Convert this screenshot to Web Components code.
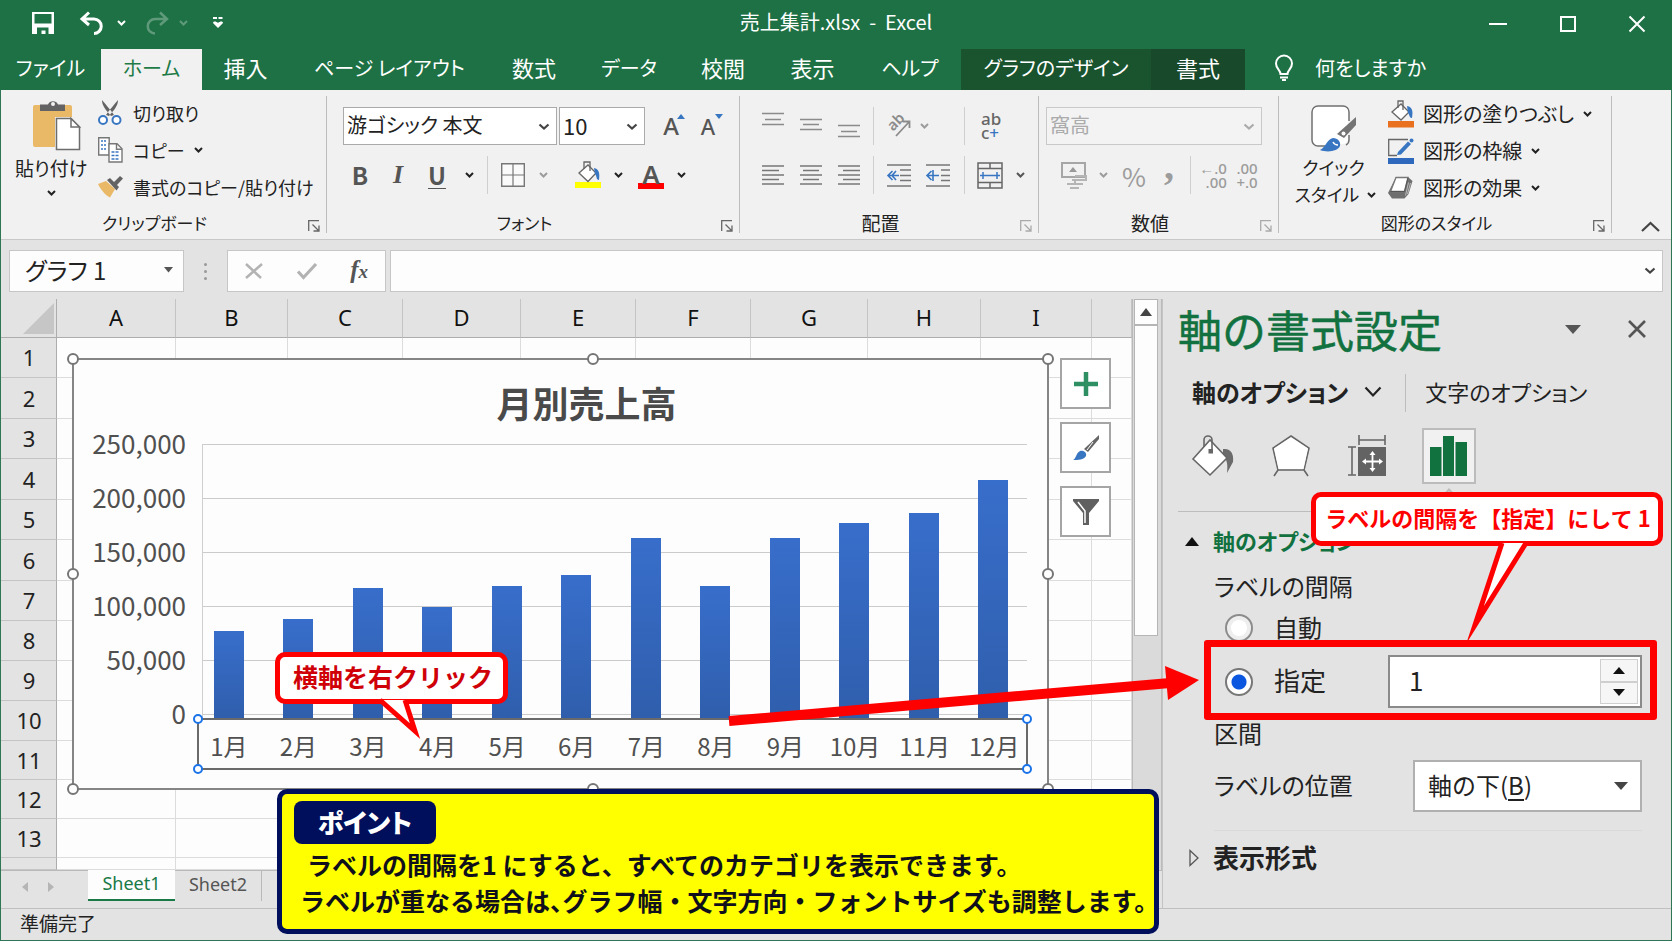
<!DOCTYPE html>
<html lang="ja">
<head>
<meta charset="utf-8">
<meta name="viewport" content="width=device-width, initial-scale=1">
<title>売上集計.xlsx - Excel</title>
<style>
  html, body { margin: 0; height: 100%; }
  body {
    font-family: "Noto Sans CJK JP", "Noto Sans", sans-serif;
    font-feature-settings: "palt";
    font-size: 20px;
    color: #222;
    overflow: hidden;
    --green: #1e7145;
  }
</style>
</head>
<body>
<excel-window></excel-window>

<script>
const BASE = `
  *, *::before, *::after { box-sizing: border-box; }
  button, input, select { font: inherit; font-feature-settings: inherit; color: inherit; margin: 0; padding: 0; border: 0; background: none; border-radius: 0; }
  button { display: grid; place-items: center; }
  svg { display: block; }
  [hidden] { display: none; }
`;
function define(name, css, html, setup) {
  const tpl = document.createElement('template');
  tpl.innerHTML = `<style>${BASE}${css}</style>${html}`;
  customElements.define(name, class extends HTMLElement {
    constructor() {
      super();
      this.attachShadow({ mode: 'open' }).append(tpl.content.cloneNode(true));
    }
    connectedCallback() { if (setup && !this.ready) { this.ready = true; setup(this, this.shadowRoot); } }
  });
}

/* ---------- icons ---------- */
const ICONS = {
  save: [22, 22, '<path d="M0 0h22v22H0z M2.500 2v9.500h17V2z M5 22v-6.500h11.500V22h-3v-3.500H9.500V22z" fill="#fff" fill-rule="evenodd"/>'],
  undo: [24, 24, '<path d="M9 1.500 2 8l7 6M2.500 8H14a7 7 0 0 1 0 14.500" fill="none" stroke="#fff" stroke-width="3"/>'],
  redo: [24, 24, '<path d="M15 1.500 22 8l-7 6M21.500 8H10a7 7 0 0 0 0 14.500" fill="none" stroke="#5f9a7b" stroke-width="2.500"/>'],
  customize: [10, 12, '<path d="M0 0h4v2H0zM5.500 0h4v2h-4zM0 6c0-2 3-2 5 0 2-2 5-2 5 0L5 11z" fill="#fff"/>'],
  chev: [9, 6, '<path d="M1 1l3.500 3.500L8 1" fill="none" stroke="currentColor" stroke-width="2"/>'],
  chevBig: [18, 12, '<path d="M1.500 1.500 9 9.500l7.500-8" fill="none" stroke="currentColor" stroke-width="2.200"/>'],
  up: [19, 11, '<path d="M1 10l8.500-8 8.500 8" fill="none" stroke="#444" stroke-width="2.200"/>'],
  down: [12, 8, '<path d="M1.500 1.500 6 5.500l4.500-4" fill="none" stroke="currentColor" stroke-width="2.200"/>'],
  tri: [9, 6, '<path d="M0 0h9L4.500 5.500z" fill="#555"/>'],
  triMid: [14, 8, '<path d="M0 0h14L7 8z" fill="#444"/>'],
  triBig: [16, 9, '<path d="M0 0h16L8 9z" fill="#555"/>'],
  triUp: [12, 8, '<path d="M0 8h12L6 0z" fill="#444"/>'],
  spinUp: [12, 7, '<path d="M0 7h12L6 0z" fill="#111"/>'],
  spinDown: [12, 7, '<path d="M0 0h12L6 7z" fill="#111"/>'],
  secOpen: [14, 9, '<path d="M0 9h14L7 0z" fill="#111"/>'],
  secClosed: [10, 18, '<path d="M1 1.500v15L9 9z" fill="none" stroke="#555" stroke-width="1.300"/>'],
  navL: [6, 10, '<path d="M6 0v10L0 5z" fill="#b5b5b5"/>'],
  navR: [6, 10, '<path d="M0 0v10l6-5z" fill="#b5b5b5"/>'],
  min: [18, 16, '<path d="M0 8h18" stroke="#fff" stroke-width="2"/>'],
  max: [16, 16, '<path d="M1 1h14v14H1z" fill="none" stroke="#fff" stroke-width="2"/>'],
  close: [16, 16, '<path d="M.500.500l15 15M15.500.500l-15 15" stroke="#fff" stroke-width="2"/>'],
  closeDark: [18, 18, '<path d="M1 1l16 16M17 1L1 17" stroke="#555" stroke-width="2.600"/>'],
  bulb: [18, 26, '<path d="M5.500 19c0-4-4.500-5-4.500-10.500a8 8 0 0 1 16 0C17 14 12.500 15 12.500 19z" fill="none" stroke="#fff" stroke-width="2"/><path d="M5 22.500h8M7 25h4" stroke="#fff" stroke-width="1.800"/>'],
  paste: [48, 52, '<rect x="0" y="6" width="39" height="42" rx="2" fill="#e9b967"/><path d="M7 12V5.500h8a5.500 5.500 0 0 1 10 0h7V12z" fill="#636363"/><circle cx="20" cy="5" r="2" fill="#f1f1f1"/><path d="M22 18h17l9 9v25H22z" fill="#f1f1f1"/><path d="M23.500 19.500H38l8.500 8.500v22.500h-23z" fill="#fff" stroke="#6d6d6d" stroke-width="1.500"/><path d="M38 19.500V28h8.500z" fill="#fff" stroke="#6d6d6d" stroke-width="1.500"/>'],
  cut: [24, 26, '<path d="M4 0c0 6 4 10 9 16l3-1C12 9 8 5 4 0zM20 0c0 6-4 10-9 16l-3-1C12 9 16 5 20 0z" fill="#636363"/><circle cx="5" cy="20" r="4" fill="#fff" stroke="#3876c2" stroke-width="2"/><circle cx="18.500" cy="20" r="4" fill="#fff" stroke="#3876c2" stroke-width="2"/>'],
  copy: [25, 26, '<path d="M.700.700h10.500V18H.700z" fill="#fff" stroke="#777" stroke-width="1.400"/><path d="M3 4h6M3 8h6M3 12h6" stroke="#3876c2" stroke-width="1.500" stroke-dasharray="2 1"/><path d="M11 6.700h8l5 5V25H11z" fill="#fff" stroke="#777" stroke-width="1.400"/><path d="M18.500 6.700v5.500H24" fill="none" stroke="#777" stroke-width="1.400"/><path d="M13.500 15h8M13.500 18.500h8M13.500 22h7" stroke="#3876c2" stroke-width="1.500" stroke-dasharray="3 1"/>'],
  brush: [25, 22, '<path d="M0 8l8-3 9 8-5 8.500C7 19 3 14 0 8z" fill="#e9b967"/><path d="M9 4l3-2 4 4 6-6 3 2.500-6 6.500 2 2-2.500 3.500z" fill="#636363"/>'],
  launcher: [12, 12, '<path d="M.700 11V.700H11M4.500 4.500 11 11M11 5.500V11H5.500" fill="none" stroke="currentColor" stroke-width="1.300"/>'],
  borders: [24, 24, '<path d="M.700.700h22.600v22.600H.700z" fill="#fafafa" stroke="#777" stroke-width="1.400"/><path d="M12 1v22M1 12h22" stroke="#777" stroke-width="1.200"/>'],
  fillYellow: [26, 28, '<rect x="0" y="21" width="26" height="6" fill="#ff0"/><path d="M4 12l9-8 8 8-8 8.500z" fill="#fff" stroke="#666" stroke-width="1.300"/><path d="M9 8V1h6v9" fill="none" stroke="#666" stroke-width="1.300"/><path d="M19 7c5 1 6 5 5 12-3 0-2-4-4-6z" fill="#3876c2"/>'],
  fillOrange: [26, 28, '<rect x="0" y="21" width="26" height="6.500" fill="#e8701f"/><path d="M4 12l9-8 8 8-8 8z" fill="#fff" stroke="#666" stroke-width="1.300"/><path d="M10 8V1h5v9" fill="none" stroke="#666" stroke-width="1.300"/><path d="M19 6c6 1 6 6 5 12-3 0-2-3-4-5z" fill="#3876c2"/>'],
  outline: [26, 26, '<rect x="0" y="20" width="26" height="6" fill="#2f69bd"/><path d="M20 1.500H.700v16H9" fill="none" stroke="#666" stroke-width="1.300"/><path d="M10 14 20 3.500l3 2.500L13 16.500l-4 .500z" fill="#3876c2"/><circle cx="23.500" cy="2.500" r="2" fill="#3876c2"/>'],
  effects: [25, 23, '<path d="M8 1h12l4.500 4-4 13-4 4.500H4L0 17z" fill="#6f6f6f"/><path d="M8 1.500h12l-3.500 14H2.500z" fill="#fff" stroke="#777" stroke-width="1.300"/><path d="M2.500 15.500h14L20 2" fill="none" stroke="#555" stroke-width="1"/><path d="M17.500 19.500l3-13M19.500 18l3-11" stroke="#bbb" stroke-width="1"/>'],
  quick: [46, 48, '<path d="M28 41H7a6 6 0 0 1-6-6V7a6 6 0 0 1 6-6h25a6 6 0 0 1 6 6v9M38 30v5a6 6 0 0 1-3 5" fill="#fff" stroke="#707070" stroke-width="1.500"/><rect x="2" y="2" width="35" height="37" rx="5" fill="#fff"/><path d="M45 12v8L33 33l-7-4z" fill="#747474"/><circle cx="32.500" cy="28.500" r="2" fill="#fff"/><path d="M9 45c6-3 7-11 13-12 5 0 8 4 7 8-2 5-12 7-20 4z" fill="#3876c2"/><path d="M22 37c1 2 3 3 5 3" stroke="#fff" stroke-width="1.500" fill="none"/>'],
  alT: [22, 30, '<path d="M0 2.500h22M3 8.500h16M0 13.500h22" stroke="#8b8b8b" stroke-width="1.500"/>'],
  alM: [22, 30, '<path d="M0 8.500h22M3 13.500h16M0 18.500h22" stroke="#8b8b8b" stroke-width="1.500"/>'],
  alB: [22, 30, '<path d="M0 14.500h22M3 20.500h16M0 25.500h22" stroke="#8b8b8b" stroke-width="1.500"/>'],
  alL: [22, 20, '<path d="M0 1h22M0 5.500h17M0 10h22M0 14.500h17M0 19h22" stroke="#777" stroke-width="1.400"/>'],
  alC: [22, 20, '<path d="M0 1h22M3 5.500h16M0 10h22M3 14.500h16M0 19h22" stroke="#777" stroke-width="1.400"/>'],
  alR: [22, 20, '<path d="M0 1h22M5 5.500h17M0 10h22M5 14.500h17M0 19h22" stroke="#777" stroke-width="1.400"/>'],
  indL: [25, 23, '<path d="M0 1h24M13 6h11M13 11.500h11M13 16.500h11M0 22h24" stroke="#777" stroke-width="1.600"/><path d="M12 11.500H1M5.500 7 1 11.500 5.500 16M9 7l-4 4.500L9 16" stroke="#3876c2" stroke-width="1.600" fill="none"/>'],
  indR: [25, 23, '<path d="M0 1h24M15 6h9M15 11.500h9M15 16.500h9M0 22h24" stroke="#777" stroke-width="1.600"/><path d="M13 11.500H1M5.500 7 1 11.500 5.500 16M7 6v11" stroke="#3876c2" stroke-width="1.600" fill="none"/>'],
  diag: [24, 24, '<path d="M9 22 22 8M16 7.500h6.500V14" stroke="#8b8b8b" stroke-width="1.800" fill="none"/>'],
  merge: [26, 27, '<path d="M1 1h24v25H1zM1 6.500h24M1 20.500h24M13 1v5.500M13 20.500V26" fill="none" stroke="#666" stroke-width="1.500"/><path d="M3 13.500h20M6 10v7M20 10v7" stroke="#3876c2" stroke-width="1.500"/>'],
  money: [26, 28, '<path d="M1 2h23v14H1z" fill="#f1f1f1" stroke="#a6a6a6" stroke-width="2"/><path d="M8 11l4-5 4 5z" fill="#999"/><path d="M14 15h11v4H11M14 19v4h8M6 23h11M9 27h9" stroke="#b5b5b5" stroke-width="2" fill="none"/>'],
  selectAll: [31, 31, '<path d="M31 0v31H0z" fill="#c6c6c6"/>'],
  fxX: [18, 16, '<path d="M1 1l15 14M17 1 1 15" stroke="#b3b3b3" stroke-width="2.500"/>'],
  fxV: [20, 16, '<path d="M1 8.500l5.500 6L19 1" stroke="#b3b3b3" stroke-width="3.200" fill="none"/>'],
  plus: [24, 24, '<path d="M12 0v24M0 12h24" stroke="#2e8f63" stroke-width="4.500"/>'],
  brush2: [28, 28, '<path d="M27 1v4L16 18l-4-3z" fill="#666"/><path d="M21 8l-6 8" stroke="#fff" stroke-width="1"/><path d="M1 26c3-1 3-7 7-9 4-1 7 2 6 5-2 4-8 4-13 4z" fill="#3876c2"/>'],
  funnel: [26, 26, '<path d="M0 0h26v2L16 14v12h-6V14L0 2z" fill="#606060"/><path d="M5 3l7 9v12" stroke="#fff" stroke-width="1.500" fill="none"/>'],
  paneFill: [42, 42, '<path d="M31 14c8-1 11 5 10 13l-6 11c1-9 0-14-4-16z" fill="#6b6b6b"/><path d="M1 24 18 5l17 18-17 17z" fill="#fff" stroke="#666" stroke-width="1.600"/><path d="M12 12V5a4 4 0 0 1 8 0v13" fill="none" stroke="#666" stroke-width="1.600"/><rect x="16.500" y="14" width="4.500" height="4.500" fill="#666"/>'],
  pentagon: [38, 42, '<path d="M19 1l18 12-5 22H6L1 13zM6 35l-4 6M32 35l4 6" fill="none" stroke="#666" stroke-width="1.600"/><path d="M19 2.200 36 13.500 31.500 34h-25L2 13.500z" fill="#fff"/>'],
  sizeProps: [38, 42, '<rect x="10" y="12" width="28" height="29" fill="#636363"/><path d="M11 0v10M37 0v10M11 5h26M0 12h8M0 40h8M4 12v28" stroke="#666" stroke-width="1.600"/><path d="M16 26.500h17M24.500 18v17" stroke="#fff" stroke-width="1.800"/><path d="M21.500 20l3-4 3 4zM21.500 33l3 4 3-4zM18 23.500l-4 3 4 3zM31 23.500l4 3-4 3z" fill="#fff"/>'],
  chart: [38, 42, '<path d="M0 12h11.500v29H0zM13 1h11v40H13zM25.500 7H37v34H25.500z" fill="#11713f"/>']
};
customElements.define('x-icon', class extends HTMLElement {
  connectedCallback() {
    if (this.shadowRoot) return;
    const [w, h, body] = ICONS[this.getAttribute('name')];
    this.attachShadow({ mode: 'open' }).innerHTML =
      `<style>:host{display:inline-block;flex:none}svg{display:block;overflow:visible}</style><svg width="${w}" height="${h}" viewBox="0 0 ${w} ${h}" aria-hidden="true">${body}</svg>`;
  }
});

/* ---------- title bar ---------- */
define('title-bar', `
  :host { display: grid; grid-template-columns: 1fr auto 1fr; align-items: center; height: 49px; background: var(--green); color: #fff; }
  .quick { display: flex; align-items: center; padding: 0 0 4px 32px; }
  .quick button:nth-child(2) { margin-left: 26px; }
  .quick button:nth-child(3) { margin-left: 13px; }
  .quick button:nth-child(4) { margin-left: 19px; }
  .quick button:nth-child(5) { margin-left: 10px; color: #5f9a7b; }
  .quick button:nth-child(6) { margin-left: 25px; }
  h1 { margin: 0; font-size: 20px; font-weight: 400; line-height: 44px; white-space: pre; align-self: start; }
  .win { display: flex; justify-content: flex-end; gap: 53px; padding: 0 27px 2px 0; }
`, `
  <div class="quick">
    <button aria-label="上書き保存"><x-icon name="save"></x-icon></button>
    <button aria-label="元に戻す"><x-icon name="undo"></x-icon></button>
    <button aria-label="元に戻す一覧"><x-icon name="chev"></x-icon></button>
    <button aria-label="やり直し"><x-icon name="redo"></x-icon></button>
    <button aria-label="やり直し一覧"><x-icon name="chev"></x-icon></button>
    <button aria-label="カスタマイズ"><x-icon name="customize"></x-icon></button>
  </div>
  <h1>売上集計.xlsx  -  Excel</h1>
  <div class="win">
    <button aria-label="最小化"><x-icon name="min"></x-icon></button>
    <button aria-label="最大化"><x-icon name="max"></x-icon></button>
    <button aria-label="閉じる"><x-icon name="close"></x-icon></button>
  </div>
`);

/* ---------- ribbon tabs ---------- */
define('ribbon-tab', `
  :host { display: block; width: var(--w); font-size: 22px; line-height: 36px; }
  :host([kana]) { font-size: 20px; line-height: 38px; }
  button { width: 100%; height: 41px; color: #fff; align-content: start; white-space: nowrap; }
  :host([active]) button { background: #f1f1f1; color: #1e7b48; }
  :host([context]) button { background: #19542f; }
  :host([context="dark"]) button { background: #17492a; }
`, `<button><slot></slot></button>`);

define('ribbon-tabs', `
  :host { display: flex; height: 41px; background: var(--green); color: #fff; }
  .tell { display: flex; gap: 22px; padding-left: 30px; align-items: center; font-size: 20px; height: 38px; line-height: 38px; }
`, `
  <ribbon-tab style="--w:101px" kana>ファイル</ribbon-tab>
  <ribbon-tab style="--w:101px" kana active>ホーム</ribbon-tab>
  <ribbon-tab style="--w:87px">挿入</ribbon-tab>
  <ribbon-tab style="--w:201px" kana>ページ レイアウト</ribbon-tab>
  <ribbon-tab style="--w:88px">数式</ribbon-tab>
  <ribbon-tab style="--w:102px" kana>データ</ribbon-tab>
  <ribbon-tab style="--w:86px">校閲</ribbon-tab>
  <ribbon-tab style="--w:93px">表示</ribbon-tab>
  <ribbon-tab style="--w:102px" kana>ヘルプ</ribbon-tab>
  <ribbon-tab style="--w:190px" kana context>グラフのデザイン</ribbon-tab>
  <ribbon-tab style="--w:94px" context="dark">書式</ribbon-tab>
  <button class="tell"><x-icon name="bulb"></x-icon><span>何をしますか</span></button>
`);

/* ---------- ribbon ---------- */
define('ribbon-group', `
  :host { display: flex; flex-direction: column; flex: none; position: relative; width: var(--w); height: 149px; padding-top: 17px; }
  :host::after { content: ""; position: absolute; right: 0; top: 6px; bottom: 6px; width: 1px; background: #bdbdbd; }
  .body { height: 105px; }
  footer { display: flex; justify-content: center; font-size: 17px; line-height: 22px; height: 24px; position: relative; padding-right: 18px; }
  :host([dim]) footer { font-size: 19px; }
  footer button { position: absolute; right: 7px; top: 8px; color: #666; }
  :host([dim]) footer button { color: #aaa; }
`, `
  <div class="body"><slot></slot></div>
  <footer><span></span><button aria-label="詳細設定"><x-icon name="launcher"></x-icon></button></footer>
`, (el, root) => { root.querySelector('span').textContent = el.getAttribute('label'); });

define('tool-row', `
  :host { display: grid; grid-template-columns: var(--cols); height: 38px; align-items: center; justify-items: center; margin-bottom: 11px; padding-left: var(--pl, 0); }
`, `<slot></slot>`);

define('tool-sep', `:host { display: block; width: 1px; height: 38px; background: #cfcfcf; }`, ``);

define('combo-box', `
  :host { display: flex; justify-self: start; width: var(--w); height: 38px; }
  .box { position: relative; flex: 1; border: 1px solid #aaa; background: #fff; display: flex; align-items: center; }
  select { appearance: none; width: 100%; height: 100%; padding: 0 0 3px 3px; font-size: var(--fs, 20px); line-height: 32px; outline: 0; opacity: 1; }
  x-icon { position: absolute; right: 6px; top: 15px; color: #444; pointer-events: none; }
  :host([dim]) .box { background: #f3f3f3; border-color: #c9c9c9; }
  :host([dim]) select, :host([dim]) x-icon { color: #ababab; }
`, `<div class="box"><select><option></option></select><x-icon name="down"></x-icon></div>`,
(el, root) => {
  const s = root.querySelector('select');
  s.setAttribute('aria-label', el.getAttribute('label'));
  s.options[0].textContent = el.getAttribute('value');
});

define('ribbon-bar', `
  :host { display: flex; height: 150px; background: #f1f1f1; border-bottom: 1px solid #c8c8c8; }
  .clip { display: grid; grid-template-columns: 83px 1fr; margin-left: 15px; margin-top: -7px; }
  .big { grid-template-rows: 52px 34px 12px; justify-items: center; align-content: start; white-space: nowrap; font-size: 19px; line-height: 32px; }
  .paste { padding-left: 0; width: 68px; margin-top: -2px; grid-template-rows: 53px 34px 16px; }
  .paste x-icon:first-child { margin-left: 12px; }
  .list { display: flex; flex-direction: column; }
  .list button { display: flex; align-items: center; height: 37px; white-space: nowrap; font-size: 18px; line-height: 32px; }
  .list button x-icon:first-child { width: 26px; margin-right: 9px; }
  .list button x-icon:nth-of-type(2) { margin-left: 9px; }
  .clip .list { margin-top: -6px; }
  .g { color: #555; }
  .l { color: #9c9c9c; }
  b, i, u, .A { font-size: 24px; line-height: 30px; color: #555; }
  i { font-family: "Liberation Serif", serif; font-size: 26px; font-weight: 700; }
  u { font-weight: 700; text-underline-offset: 3px; text-decoration-thickness: 1px; }
  .A { position: relative; font-weight: 500; font-family: "Noto Sans", sans-serif; }
  .A svg { position: absolute; left: 14px; top: 3px; }
  .small { font-size: 22px; }
  .red { border-bottom: 6px solid #f00; width: 26px; height: 27px; line-height: 24px; text-align: center; font-size: 26px; font-weight: 600; }
  .diag { position: relative; display: grid; place-items: center; width: 26px; height: 26px; }
  .diag span { position: absolute; font: 600 15px/16px "Noto Sans"; color: #8b8b8b; transform: rotate(-45deg); left: 0; top: 0; }
  .wrap { font: 500 17px/14px "Noto Sans"; color: #666; width: 20px; justify-items: start; align-content: center; }
  .wrap em { font-style: normal; color: #3876c2; }
  .pct { font-size: 26px; }
  .com { font: 700 40px/20px "Liberation Serif"; height: 38px; padding-bottom: 22px; }
  .dec { font: 500 15px/14px "Noto Sans"; justify-items: end; align-content: center; }
  .styles { display: grid; grid-template-columns: 109px 1fr; margin-top: -8px; }
  .quick { grid-template-rows: 50px 27px 27px; margin-top: 5px; padding-left: 0; line-height: 27px; font-size: 18px; }
  .quick span { display: flex; align-items: center; gap: 8px; }
  .quick .two { margin-left: 4px; }
  .styles .list { margin-top: -4px; }
  .styles .list button { font-size: 20px; line-height: 34px; }
  .collapse { margin-left: auto; align-self: flex-end; margin-right: 12px; margin-bottom: 7px; }
`, `
  <ribbon-group label="クリップボード" style="--w:327px">
    <div class="clip">
      <button class="big paste"><x-icon name="paste"></x-icon><span>貼り付け</span><x-icon name="chev"></x-icon></button>
      <div class="list">
        <button><x-icon name="cut"></x-icon>切り取り</button>
        <button><x-icon name="copy"></x-icon>コピー<x-icon name="chev"></x-icon></button>
        <button><x-icon name="brush"></x-icon>書式のコピー/貼り付け</button>
      </div>
    </div>
  </ribbon-group>
  <ribbon-group label="フォント" style="--w:413px">
    <tool-row style="--pl:16px;--cols:216px 86px 8px 36px 38px">
      <combo-box label="フォント名" value="游ゴシック 本文" style="--w:214px"></combo-box>
      <combo-box label="フォント サイズ" value="10" style="--w:86px;--fs:22px"></combo-box>
      <span></span>
      <button class="A" aria-label="フォント サイズの拡大">A<svg width="8" height="5"><path d="M0 5h8L4 0z" fill="#3876c2"/></svg></button>
      <button class="A small" aria-label="フォント サイズの縮小">A<svg width="8" height="5"><path d="M0 0h8L4 5z" fill="#3876c2"/></svg></button>
    </tool-row>
    <tool-row style="--pl:14px;--cols:38px 38px 40px 24px 12px 40px 20px 15px 40px 20px 3px 40px 20px">
      <button><b>B</b></button><button><i>I</i></button><button><u>U</u></button>
      <button aria-label="下線の種類"><x-icon name="chev"></x-icon></button>
      <tool-sep></tool-sep>
      <button aria-label="罫線"><x-icon name="borders"></x-icon></button><button class="l" aria-label="罫線の種類"><x-icon name="chev"></x-icon></button>
      <span></span>
      <button aria-label="塗りつぶしの色"><x-icon name="fillYellow"></x-icon></button><button aria-label="塗りつぶしの色一覧"><x-icon name="chev"></x-icon></button>
      <span></span>
      <button class="A red">A</button><button aria-label="フォントの色一覧"><x-icon name="chev"></x-icon></button>
    </tool-row>
  </ribbon-group>
  <ribbon-group label="配置" style="--w:299px" dim>
    <tool-row style="--pl:14px;--cols:38px 38px 38px 10px 42px 8px 32px 8px 46px">
      <button aria-label="上揃え"><x-icon name="alT"></x-icon></button><button aria-label="上下中央揃え"><x-icon name="alM"></x-icon></button><button aria-label="下揃え"><x-icon name="alB"></x-icon></button>
      <tool-sep></tool-sep>
      <button class="diag" aria-label="方向"><span>ab</span><x-icon name="diag"></x-icon></button><button class="l" aria-label="方向一覧"><x-icon name="chev"></x-icon></button>
      <span></span><tool-sep></tool-sep>
      <button class="wrap" aria-label="折り返して全体を表示する"><span>ab</span><span>c<em>+</em></span></button>
    </tool-row>
    <tool-row style="--pl:14px;--cols:38px 38px 38px 10px 42px 36px 4px 8px 44px 16px">
      <button aria-label="左揃え"><x-icon name="alL"></x-icon></button><button aria-label="中央揃え"><x-icon name="alC"></x-icon></button><button aria-label="右揃え"><x-icon name="alR"></x-icon></button>
      <tool-sep></tool-sep>
      <button aria-label="インデントを減らす"><x-icon name="indL"></x-icon></button><button aria-label="インデントを増やす"><x-icon name="indR"></x-icon></button>
      <span></span><tool-sep></tool-sep>
      <button aria-label="セルを結合して中央揃え"><x-icon name="merge"></x-icon></button><button class="g" aria-label="結合の種類"><x-icon name="chev"></x-icon></button>
    </tool-row>
  </ribbon-group>
  <ribbon-group label="数値" style="--w:240px" dim>
    <tool-row style="--pl:7px;--cols:216px"><combo-box dim label="表示形式" value="窩高" style="--w:216px"></combo-box></tool-row>
    <tool-row class="l" style="--pl:15px;--cols:40px 18px 44px 26px 16px 30px 38px">
      <button aria-label="通貨表示形式"><x-icon name="money"></x-icon></button><button aria-label="通貨一覧"><x-icon name="chev"></x-icon></button>
      <button class="pct l">%</button><button class="com l">,</button><tool-sep></tool-sep>
      <button class="dec l"><span>←.0</span><span>.00</span></button><button class="dec l"><span>.00</span><span>+.0</span></button>
    </tool-row>
  </ribbon-group>
  <ribbon-group label="図形のスタイル" style="--w:333px">
    <div class="styles">
      <button class="big quick"><x-icon name="quick"></x-icon><span>クイック</span><span class="two">スタイル<x-icon name="chev"></x-icon></span></button>
      <div class="list">
        <button><x-icon name="fillOrange"></x-icon>図形の塗りつぶし<x-icon name="chev"></x-icon></button>
        <button><x-icon name="outline"></x-icon>図形の枠線<x-icon name="chev"></x-icon></button>
        <button><x-icon name="effects"></x-icon>図形の効果<x-icon name="chev"></x-icon></button>
      </div>
    </div>
  </ribbon-group>
  <button class="collapse" aria-label="リボンを折りたたむ"><x-icon name="up"></x-icon></button>
`);

/* ---------- formula bar ---------- */
define('formula-bar', `
  :host { display: flex; height: 59px; padding: 10px 9px 7px; background: #e3e3e3; }
  .name { position: relative; width: 175px; }
  .name input { width: 100%; height: 42px; border: 1px solid #c6c6c6; background: #fdfdfd; padding: 0 0 4px 15px; font-size: 24px; outline: 0; }
  .name x-icon { position: absolute; right: 11px; top: 17px; }
  .dots { display: grid; place-content: center; gap: 4px; width: 43px; }
  .dots i { width: 3px; height: 3px; border-radius: 2px; background: #999; }
  .fx { display: flex; justify-content: space-between; align-items: center; width: 159px; height: 42px; border: 1px solid #c6c6c6; background: #fdfdfd; padding: 0 17px; }
  .fx em { font: italic 700 25px/36px "Liberation Serif", serif; color: #555; }
  .fx em small { font-size: 19px; }
  .formula { position: relative; flex: 1; margin-left: 4px; }
  .formula input { width: 100%; height: 42px; border: 1px solid #c6c6c6; background: #fdfdfd; padding: 0 34px 0 10px; outline: 0; }
  .formula x-icon { position: absolute; right: 7px; top: 17px; color: #444; }
`, `
  <div class="name"><input aria-label="名前ボックス" value="グラフ 1"><x-icon name="tri"></x-icon></div>
  <div class="dots"><i></i><i></i><i></i></div>
  <div class="fx">
    <button aria-label="キャンセル"><x-icon name="fxX"></x-icon></button>
    <button aria-label="入力"><x-icon name="fxV"></x-icon></button>
    <button aria-label="関数の挿入"><em>f<small>x</small></em></button>
  </div>
  <div class="formula"><input aria-label="数式バー"><x-icon name="down"></x-icon></div>
`);

/* ---------- worksheet ---------- */
const COLS = [['A', 119], ['B', 112], ['C', 115], ['D', 118], ['E', 115], ['F', 115], ['G', 117], ['H', 113], ['I', 111]];
const ROWS = [40, 41, 40, 41, 40, 41, 40, 40, 40, 40, 39, 39, 39, 12];
define('sheet-grid', `
  :host { display: block; overflow: hidden; background: #fdfdfd; }
  table { table-layout: fixed; width: 100%; border-collapse: separate; border-spacing: 0; }
  th { background: #e3e3e3; font-weight: 400; font-size: 22px; font-family: "Noto Sans", sans-serif; padding: 0; border-right: 1px solid #c4c4c4; border-bottom: 1px solid #c4c4c4; color: #222; line-height: 30px; }
  thead th { height: 39px; border-bottom-color: #adadad; padding: 0 0 2px; color: #111; }
  tbody th { border-right-color: #adadad; line-height: 20px; padding: 0 0 1px 2px; }
  thead th:first-child { border-right-color: #adadad; }
  thead x-icon { display: block; margin: 2px 0 0 23px; }
  td { padding: 0; border-right: 1px solid #dcdcdc; border-bottom: 1px solid #dcdcdc; }
`, `<table><colgroup></colgroup><thead><tr></tr></thead><tbody></tbody></table>`,
(el, root) => {
  root.querySelector('colgroup').innerHTML = '<col style="width:57px">' + COLS.map(c => `<col style="width:${c[1]}px">`).join('') + '<col>';
  root.querySelector('thead tr').innerHTML = '<th><x-icon name="selectAll"></x-icon></th>' + COLS.map(c => `<th scope="col">${c[0]}</th>`).join('') + '<th></th>';
  root.querySelector('tbody').innerHTML = ROWS.map((h, i) =>
    `<tr style="height:${h}px"><th scope="row">${i < 13 ? i + 1 : ''}</th>${'<td></td>'.repeat(10)}</tr>`).join('');
});

/* ---------- chart ---------- */
const BARS = [87, 99, 130, 111, 132, 143, 180, 132, 180, 195, 205, 238];
define('column-chart', `
  :host { display: block; position: relative; width: 977px; height: 432px; border: 2px solid #858585; background: #fdfdfd; }
  h2 { margin: 0; padding: 15px 0 0 52px; text-align: center; font-size: 36px; line-height: 54px; font-weight: 700; color: #4a4a4a; font-feature-settings: normal; }
  .plot { position: absolute; left: 0; top: 57px; right: 20px; display: grid; grid-template-columns: 112px 1fr; column-gap: 16px; color: #505050; }
  .y { grid-row: 1 / 3; font-size: 26px; line-height: 54px; text-align: right; font-feature-settings: normal; margin-top: -1px; }
  .area { position: relative; height: 301px; }
  .grid { margin-top: 27px; border-left: 1px solid #cfcfcf; display: grid; grid-template-rows: repeat(5, 54px) 4px; }
  .grid i { border-top: 1px solid #cbcbcb; }
  .bars { position: absolute; inset: 0 -1px 0 -8px; display: grid; grid-template-columns: repeat(12, 1fr); align-items: end; justify-items: center; }
  .bars i { width: 30px; background: linear-gradient(#386ecb, #2f5eac); }
  .axis { grid-column: 2; margin: 0 -1px 0 -5px; position: relative; height: 52px; border: 2px solid #6a6a6a; background: #fdfdfd; font-feature-settings: normal; }
  .months { margin: 0 -3px 0 -5px; display: grid; grid-template-columns: repeat(12, 1fr); font-size: 24px; line-height: 51px; text-align: center; white-space: nowrap; }
  .axis b, .h { position: absolute; border-radius: 50%; background: #fff; }
  .axis b { width: 10px; height: 10px; border: 2px solid #1a73e8; }
  .h { width: 12px; height: 12px; border: 2px solid #757575; }
  .nw { left: -6px; top: -6px; } .ne { right: -6px; top: -6px; } .sw { left: -6px; bottom: -6px; } .se { right: -6px; bottom: -6px; }
  .h.nw { left: -7px; top: -7px; } .h.ne { right: -7px; top: -7px; } .h.sw { left: -7px; bottom: -7px; } .h.se { right: -7px; bottom: -7px; }
  .n { left: calc(50% + 26px); top: -7px; } .s { left: calc(50% + 26px); bottom: -7px; }
  .w { left: -7px; top: calc(50% - 6px); } .e { right: -7px; top: calc(50% - 6px); }
`, `
  <h2>月別売上高</h2>
  <div class="plot">
    <div class="y">250,000<br>200,000<br>150,000<br>100,000<br>50,000<br>0</div>
    <div class="area"><div class="grid"><i></i><i></i><i></i><i></i><i></i><i></i></div><div class="bars"></div></div>
    <div class="axis"><div class="months"></div><b class="nw"></b><b class="ne"></b><b class="sw"></b><b class="se"></b></div>
  </div>
  <span class="h nw"></span><span class="h n"></span><span class="h ne"></span><span class="h w"></span><span class="h e"></span><span class="h sw"></span><span class="h s"></span><span class="h se"></span>
`, (el, root) => {
  root.querySelector('.bars').innerHTML = BARS.map(v => `<i style="height:${v}px"></i>`).join('');
  root.querySelector('.months').innerHTML = BARS.map((_, i) => `<span>${i + 1}月</span>`).join('');
});

define('chart-buttons', `
  :host { display: grid; gap: 13px; }
  button { width: 51px; height: 51px; border: 2px solid #a5a5a5; background: #fff; }
`, `
  <button aria-label="グラフ要素"><x-icon name="plus"></x-icon></button>
  <button aria-label="グラフ スタイル"><x-icon name="brush2"></x-icon></button>
  <button aria-label="グラフ フィルター"><x-icon name="funnel"></x-icon></button>
`);

define('scroll-bar', `
  :host { display: flex; flex-direction: column; width: 30px; background: #dadada; border-left: 1px solid #b9b9b9; border-right: 1px solid #bbb; padding: 0 3px 0 1px; }
  button { height: 26px; width: 100%; border: 1px solid #b5b5b5; background: #fdfdfd; margin-top: 0; }
  .thumb { height: 311px; border: 1px solid #b5b5b5; background: #fdfdfd; }
`, `<button aria-label="上へスクロール"><x-icon name="triUp"></x-icon></button><div class="thumb"></div>`);

define('sheet-tabs', `
  :host { display: flex; height: 38px; background: #e3e3e3; border-top: 1px solid #b9b9b9; font-family: "Noto Sans", sans-serif; font-size: 18px; }
  .nav { display: flex; gap: 20px; align-items: center; width: 88px; padding: 0 0 6px 22px; }
  .tab { height: 31px; width: 87px; margin-top: -1px; line-height: 26px; padding-bottom: 3px; color: #555; border-right: 1px solid #b9b9b9; }
  .on { background: #fdfdfd; color: #1a7a47; border-right: 0; border-bottom: 2px solid #1a7a47; }
`, `
  <div class="nav"><button aria-label="前のシート"><x-icon name="navL"></x-icon></button><button aria-label="次のシート"><x-icon name="navR"></x-icon></button></div>
  <button class="tab on">Sheet1</button><button class="tab">Sheet2</button>
`);

define('work-sheet', `
  :host { display: grid; grid-template: 1fr auto / 1fr auto; position: relative; min-width: 0; overflow: hidden; background: #e3e3e3; }
  sheet-grid { grid-area: 1 / 1; min-height: 0; }
  scroll-bar { grid-area: 1 / 2; }
  sheet-tabs { grid-area: 2 / 1 / 3 / 3; }
  column-chart { position: absolute; left: 72px; top: 59px; }
  chart-buttons { position: absolute; left: 1060px; top: 59px; }
`, `<sheet-grid></sheet-grid><scroll-bar></scroll-bar><sheet-tabs></sheet-tabs><column-chart></column-chart><chart-buttons></chart-buttons>`);

/* ---------- callout ---------- */
define('call-out', `
  :host { display: block; position: absolute; border: 5px solid #f00; border-radius: 10px; background: #fff; font-weight: 700; color: var(--ink, #f00); white-space: nowrap; text-align: center; font-feature-settings: normal; }
  svg { position: absolute; left: 0; top: 0; width: 1px; height: 1px; overflow: visible; }
  .fill { fill: #fff; }
  .edge { fill: none; stroke: #f00; stroke-width: 5px; stroke-miterlimit: 12; }
`, `<svg aria-hidden="true"><polygon class="fill"/><polyline class="edge"/></svg><slot></slot>`,
(el, root) => {
  const p = el.getAttribute('tail');
  root.querySelector('.fill').setAttribute('points', p);
  root.querySelector('.edge').setAttribute('points', p);
});

/* ---------- task pane ---------- */
define('task-pane', `
  :host { display: block; position: relative; width: 510px; background: #e3e3e3; border-left: 1px solid #c3c3c3; padding: 4px 30px 0 15px; font-size: 24px; }
  header { display: flex; align-items: center; height: 56px; padding-bottom: 4px; margin-right: -4px; }
  h2 { flex: 1; margin: 0; font-size: 44px; font-weight: 400; line-height: 52px; height: 52px; color: #11713f; font-feature-settings: normal; -webkit-text-stroke: 0.5px #11713f; }
  header button + button { margin-left: 47px; }
  .modes { display: flex; align-items: center; height: 40px; margin-top: 14px; padding-left: 14px; }
  .modes button { display: flex; align-items: center; gap: 16px; line-height: 34px; padding-bottom: 2px; white-space: nowrap; }
  .modes button:first-child { font-weight: 700; }
  .modes button:last-child { margin-left: 19px; font-size: 22px; line-height: 32px; padding-bottom: 4px; }
  .modes hr { width: 1px; height: 38px; border: 0; margin: 0 0 0 23px; background: #bdbdbd; }
  .icons { display: grid; grid-template-columns: 42px 38px 38px 54px; column-gap: 38px; height: 56px; margin-top: 15px; padding-left: 14px; align-items: center; }
  .icons .on { position: relative; width: 54px; height: 56px; border: 2px solid #bcbcbc; background: #f1f1f1; margin-left: -2px; }
  .icons .on::after { content: ""; position: absolute; left: 21px; top: 60px; width: 8px; height: 8px; border: solid #bcbcbc; border-width: 2px 0 0 2px; transform: rotate(45deg); }
  .rule { height: 1px; border: 0; margin: 27px 0 0; background: #bdbdbd; }
  h3 { display: flex; align-items: center; margin: 11px 0 0; height: 36px; font-size: 22px; line-height: 32px; padding-left: 7px; }
  h3 span { margin-left: 14px; padding-bottom: 3px; }
  .green { color: #11713f; }
  .field { padding-left: 36px; line-height: 32px; }
  .f1 { height: 36px; margin-top: 11px; }
  .radio { display: flex; align-items: center; padding-left: 47px; }
  .radio label { flex: none; width: 114px; margin-left: 21px; line-height: 36px; padding-bottom: 3px; }
  .r1 { height: 36px; margin-top: 4px; }
  .r2 { height: 53px; margin-top: 9px; font-size: 26px; }
  .r2 label { padding-bottom: 4px; }
  input[type=radio] { flex: none; appearance: none; width: 28px; height: 28px; border-radius: 50%; border: 2px solid #8c8c8c; background: #fff; box-shadow: inset 0 0 0 4px #eee; }
  input[type=radio]:checked { background: radial-gradient(circle, #0b57e0 7px, #fff 8px); box-shadow: none; border-color: #777; }
  .spin { display: flex; flex: 1; min-width: 0; height: 53px; border: 2px solid #8a8a8a; background: #fff; padding: 2px; }
  .spin input { flex: 1; width: 0; min-width: 0; outline: 0; padding: 0 0 4px 17px; appearance: textfield; font-size: 26px; }
  .spin input::-webkit-inner-spin-button { appearance: none; }
  .spin div { display: grid; grid-template-rows: 1fr 1fr; width: 38px; }
  .spin button { border: 1px solid #cfcfcf; background: #f6f6f6; }
  .f2 { height: 30px; margin-top: 11px; line-height: 28px; }
  .pos { display: flex; align-items: center; justify-content: space-between; height: 52px; margin-top: 11px; }
  .pos label { padding-bottom: 3px; }
  .sel { position: relative; width: 229px; height: 52px; }
  select { appearance: none; width: 100%; height: 100%; border: 2px solid #b0b0b0; padding: 0 30px 3px 13px; outline: 0; font-feature-settings: normal;
    background: linear-gradient(#222, #222) 93px 37px / 16px 2px no-repeat #fff; }
  .sel x-icon { position: absolute; right: 14px; top: 22px; pointer-events: none; }
  .faint { height: 1px; border: 0; margin: 18px 0 0 36px; background: #d9d9d9; }
  .h2 { margin-top: 9px; font-size: 26px; color: #222; padding-left: 11px; }
  .frame { position: absolute; left: 41px; top: 341px; width: 453px; height: 80px; border: 7px solid #f00; border-radius: 3px; }
  call-out { left: 148px; top: 193px; width: 352px; height: 54px; font-size: 22px; line-height: 41px; padding-left: 2px; }
`, `
  <header><h2>軸の書式設定</h2><button aria-label="作業ウィンドウ オプション"><x-icon name="triBig"></x-icon></button><button aria-label="閉じる"><x-icon name="closeDark"></x-icon></button></header>
  <div class="modes"><button>軸のオプション<x-icon name="chevBig"></x-icon></button><hr><button>文字のオプション</button></div>
  <div class="icons">
    <button aria-label="塗りつぶしと線"><x-icon name="paneFill"></x-icon></button>
    <button aria-label="効果"><x-icon name="pentagon"></x-icon></button>
    <button aria-label="サイズとプロパティ"><x-icon name="sizeProps"></x-icon></button>
    <button class="on" aria-label="軸のオプション"><x-icon name="chart"></x-icon></button>
  </div>
  <hr class="rule">
  <h3 class="green"><x-icon name="secOpen"></x-icon><span>軸のオプション</span></h3>
  <div class="field f1">ラベルの間隔</div>
  <div class="radio r1"><input type="radio" name="gap" id="auto"><label for="auto">自動</label></div>
  <div class="radio r2"><input type="radio" name="gap" id="fixed" checked><label for="fixed">指定</label>
    <div class="spin"><input type="number" value="1" min="1" aria-label="間隔の単位"><div><button aria-label="増やす"><x-icon name="spinUp"></x-icon></button><button aria-label="減らす"><x-icon name="spinDown"></x-icon></button></div></div></div>
  <div class="field f2">区間</div>
  <div class="field pos"><label for="pos">ラベルの位置</label><div class="sel"><select id="pos"><option>軸の下(B)</option></select><x-icon name="triMid"></x-icon></div></div>
  <hr class="faint">
  <h3 class="h2"><x-icon name="secClosed"></x-icon><span>表示形式</span></h3>
  <call-out tail="186,46 159,128 210,46">ラベルの間隔を【指定】にして 1</call-out>
  <div class="frame"></div>
`, (el, root) => {
  const n = root.querySelector('input[type=number]');
  const [up, down] = root.querySelectorAll('.spin button');
  up.onclick = () => n.stepUp();
  down.onclick = () => n.stepDown();
});

/* ---------- tip box ---------- */
define('point-box', `
  :host { display: block; border: 5px solid #000f5c; border-radius: 10px; background: #ff0; font-weight: 700; color: #10101c; padding: 7px 12px 0; white-space: nowrap; font-feature-settings: normal; }
  strong { display: block; width: 142px; height: 43px; border-radius: 8px; background: #000f5c; color: #fff; text-align: center; font-size: 26px; line-height: 41px; font-feature-settings: "palt"; }
  p { margin: 0; line-height: 36px; font-size: 25px; }
  .a { margin: 2px 0 0 13px; }
  .b { margin-left: 6px; }
  .half { font-feature-settings: "halt"; }
`, `<strong>ポイント</strong><p class="a">ラベルの間隔を1 にすると、すべてのカテゴリを表示できます。</p><p class="b">ラベルが重なる場合は<span class="half">、</span>グラフ幅・文字方向・フォントサイズも調整します。</p>`);

/* ---------- window ---------- */
define('excel-window', `
  :host { display: flex; flex-direction: column; position: relative; min-height: 100vh; background: #e3e3e3; overflow: hidden; }
  main { flex: 1; display: grid; grid-template-columns: 1fr auto; min-height: 0; }
  footer { height: 33px; border-top: 1px solid #c0c0c0; padding-left: 20px; font-size: 19px; line-height: 27px; }
  :host::after { content: ""; position: absolute; inset: 90px 0 0; border: solid #2f7656; border-width: 0 1px 1px; pointer-events: none; }
  .arrow { position: absolute; left: 0; top: 0; width: 100%; height: 100%; pointer-events: none; }
  .tip { position: absolute; left: 275px; top: 652px; width: 233px; height: 52px; padding-left: 3px; font-size: 25px; line-height: 39px; --ink: #cf0008; }
  point-box { position: absolute; left: 277px; top: 789px; width: 882px; height: 145px; }
`, `
  <title-bar></title-bar>
  <ribbon-tabs></ribbon-tabs>
  <ribbon-bar></ribbon-bar>
  <formula-bar></formula-bar>
  <main><work-sheet></work-sheet><task-pane></task-pane></main>
  <footer>準備完了</footer>
  <call-out class="tip" tail="100,43 135,74 125,43">横軸を右クリック</call-out>
  <svg class="arrow" aria-hidden="true"><path d="M729 721 1170 683" stroke="#f00" stroke-width="10"/><path d="M1165 666l34 14-31 20z" fill="#f00"/></svg>
  <point-box></point-box>
`);
</script>
</body>
</html>
